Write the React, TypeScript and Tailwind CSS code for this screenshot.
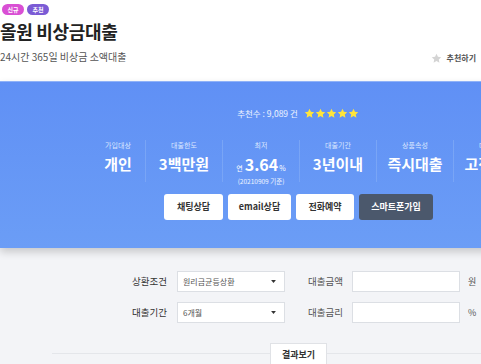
import React from 'react';

const stats = [
  { label: '가입대상', value: '개인', width: 'w-[54px]' },
  { label: '대출한도', value: '3백만원', width: 'w-[77px]' },
  { label: '최저', value: 'rate', width: 'w-[77px]' },
  { label: '대출기간', value: '3년이내', width: 'w-[77px]' },
  { label: '상품속성', value: '즉시대출', width: 'w-[77px]' },
  { label: '대출금리', value: '고정금리', width: 'w-[77px]' },
];

const Star = ({ className }: { className: string }) => (
  <svg viewBox="0 0 24 24" className={className} fill="currentColor">
    <path d="M12 1.5l3.1 6.6 7.2.9-5.3 5 1.4 7.1L12 17.6l-6.4 3.5 1.4-7.1-5.3-5 7.2-.9z" />
  </svg>
);

const Caret = () => (
  <svg viewBox="0 0 8 5" className="w-[5px] h-[3px] text-[#333]" fill="currentColor">
    <path d="M0 0h8L4 5z" />
  </svg>
);

export default function App() {
  return (
    <div className="w-[481px] h-[364px] overflow-hidden bg-[#f3f4f7] font-['Noto_Sans_CJK_KR','Noto_Sans',sans-serif]">
      <div className="w-[592px]">
        {/* header */}
        <div className="h-[81px] bg-white w-[481px] pt-[4px]">
          <div className="flex gap-[3px] pl-[2px]">
            <span className="h-[11px] w-[22px] rounded-full bg-[#d94fd4] text-white text-[6px] font-bold leading-[11px] text-center">신규</span>
            <span className="h-[11px] w-[22px] rounded-full bg-[#7b5bd5] text-white text-[6px] font-bold leading-[11px] text-center">추천</span>
          </div>
          <h1 className="mt-[4px] text-[18px] font-bold leading-[24px] text-[#222] tracking-[-0.3px]">올원 비상금대출</h1>
          <div className="mt-[7px] flex items-center justify-between pr-[5px]">
            <p className="text-[10px] leading-[14px] text-[#555]">24시간 365일 비상금 소액대출</p>
            <div className="flex items-center gap-[5px] mt-[2px]">
              <Star className="w-[11px] h-[11px] text-[#d4d4d4]" />
              <span className="text-[8px] font-bold text-[#555]">추천하기</span>
            </div>
          </div>
        </div>

        {/* blue panel */}
        <div className="h-[167px] bg-gradient-to-b from-[#6090f5] to-[#6b9df6] border-t border-[#90b2f8] shadow-[0_4px_8px_rgba(0,0,0,0.18)] relative">
          <div className="pt-[24px] flex justify-center items-center gap-[6px] pl-[4px]">
            <span className="text-[8.5px] text-white/90 leading-[14px]">추천수 : 9,089 건</span>
            <div className="flex text-[#ffe53b]">
              {[0, 1, 2, 3, 4].map((i) => (
                <Star key={i} className="w-[11px] h-[11px]" />
              ))}
            </div>
          </div>

          <div className="mt-[20px] flex pl-[91px]">
            {stats.map((s, i) => (
              <div
                key={s.label}
                className={`${s.width} shrink-0 flex flex-col items-center ${i > 0 ? 'border-l border-[#79a5f6]' : ''} h-[42px]`}
              >
                <span className="text-[7px] leading-[10px] text-[#dce7ff]">{s.label}</span>
                {s.value === 'rate' ? (
                  <>
                    <span className="mt-[5px] flex items-baseline text-white leading-[18px]">
                      <span className="text-[7px] mr-[2px]">연</span>
                      <span className="text-[16px] font-bold">3.64</span>
                      <span className="text-[7px] ml-[1px]">%</span>
                    </span>
                    <span className="text-[6.5px] leading-[9px] text-white/90">(20210909 기준)</span>
                  </>
                ) : (
                  <span className="mt-[5px] text-[15px] font-bold leading-[18px] text-white">{s.value}</span>
                )}
              </div>
            ))}
          </div>

          <div className="mt-[12px] flex justify-center gap-[5px] pl-[5px]">
            <button className="w-[59px] h-[26px] bg-white rounded-[3px] text-[9px] font-bold text-[#333]">채팅상담</button>
            <button className="w-[63px] h-[26px] bg-white rounded-[3px] text-[9px] font-bold text-[#333]">email상담</button>
            <button className="w-[58px] h-[26px] bg-white rounded-[3px] text-[9px] font-bold text-[#333]">전화예약</button>
            <button className="w-[74px] h-[26px] bg-[#4b586c] rounded-[3px] text-[9px] font-bold text-white">스마트폰가입</button>
          </div>
        </div>

        {/* calculator */}
        <div className="pt-[23px]">
          {[
            { l1: '상환조건', v1: '원리금균등상환', l2: '대출금액', u: '원' },
            { l1: '대출기간', v1: '6개월', l2: '대출금리', u: '%' },
          ].map((r, i) => (
            <div key={r.l1} className={`flex items-center h-[21px] ${i > 0 ? 'mt-[10px]' : ''}`}>
              <span className="w-[168px] pr-[1px] text-right text-[9.5px] text-[#333]">{r.l1}</span>
              <div className="ml-[9px] w-[108px] h-[21px] bg-white border border-[#dcdfe4] flex items-center justify-between pl-[5px] pr-[8px]">
                <span className="text-[8px] text-[#555]">{r.v1}</span>
                <Caret />
              </div>
              <span className="ml-[23px] text-[9.5px] text-[#555]">{r.l2}</span>
              <div className="ml-[9px] w-[108px] h-[21px] bg-white border border-[#dcdfe4]" />
              <span className="ml-[8px] text-[9px] text-[#555]">{r.u}</span>
            </div>
          ))}

          <div className="mt-[30px] ml-[52px] border-t border-[#e4e6ea] relative">
            <button className="absolute left-[218px] -top-[11px] w-[57px] h-[24px] bg-white border border-[#e0e2e6] text-[9px] font-bold text-[#333]">결과보기</button>
          </div>
        </div>
      </div>
    </div>
  );
}
